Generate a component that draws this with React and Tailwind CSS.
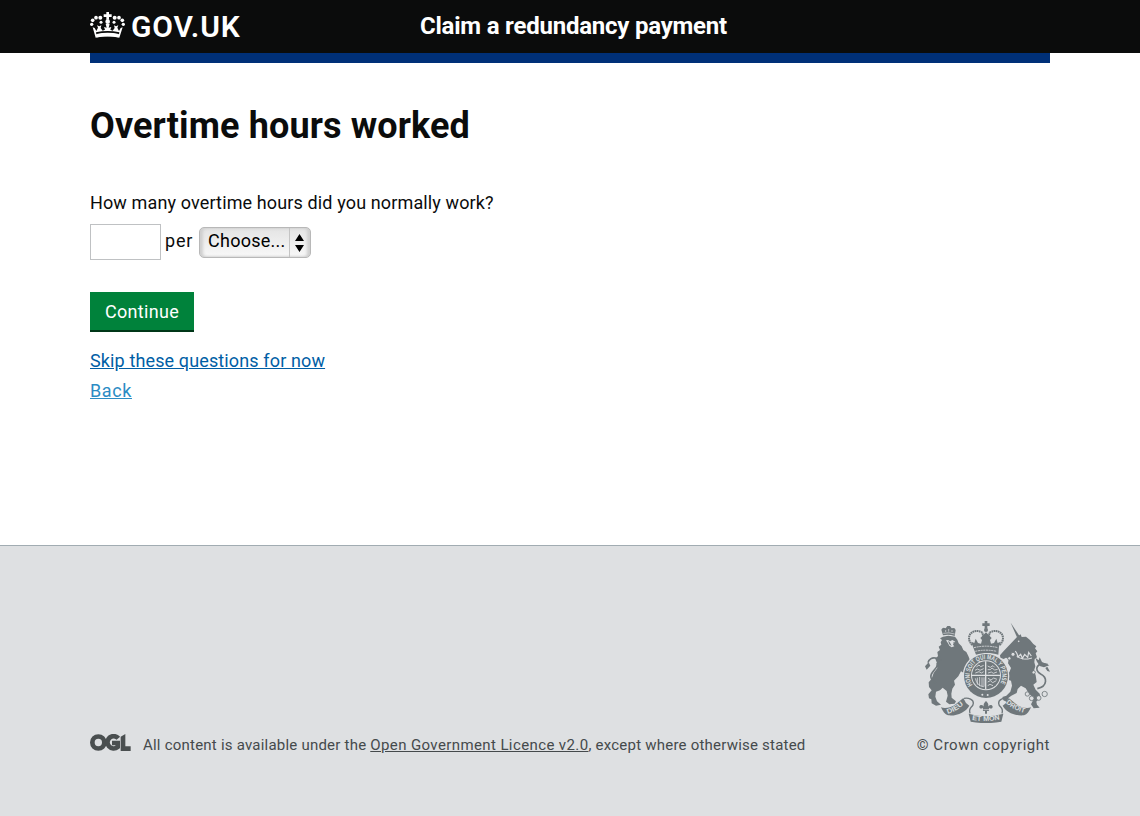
import React from 'react';

function Crown() {
  return (
    <svg className="block h-[27px] w-[35px]" viewBox="0 0 105 81" fill="#fff">
      <path d="M49 0h8v7h8v8h-8v8h-8v-8h-8V7h8z" />
      <circle cx="53" cy="29" r="7" />
      <circle cx="31" cy="17" r="6" />
      <circle cx="18" cy="17" r="5.5" />
      <circle cx="8" cy="25" r="5.5" />
      <circle cx="5" cy="37" r="5" />
      <circle cx="74" cy="17" r="6" />
      <circle cx="87" cy="17" r="5.5" />
      <circle cx="97" cy="25" r="5.5" />
      <circle cx="100" cy="37" r="5" />
      <circle cx="33" cy="31" r="4.5" />
      <circle cx="72" cy="31" r="4.5" />
      <path d="M8 46l6 2 5 9 5-10-3-7 7 3 6-3-2 8 6 8 7-3-3-8 8 2-3-11h12l-3 11 8-2-3 8 7 3 6-8-2-8 6 3 7-3-3 7 5 10 5-9 6-2-10 31c-21-5-49-5-71 0z" />
      <path d="M18 61q35-8 70 0l-1 6q-34-7-68 0z" fill="#0b0c0c" />
      <path d="M20 66q33-7 66 0l-1 10q-32-6-64 0z" />
    </svg>
  );
}

function OglLogo() {
  return (
    <svg className="-mt-[5px] block h-[17px] w-[41px]" viewBox="0 0 123 51">
      <g fill="none" stroke="#4a4f50" strokeWidth="14">
        <circle cx="25" cy="25.500" r="18" />
        <path d="M85 13A18.500 18.500 0 1 0 83 39V27H66" />
      </g>
      <path fill="#4a4f50" d="M92 8L106 0V37H122V51H92z" />
    </svg>
  );
}

function CoatOfArms() {
  return (
    <svg className="block h-[102px] w-[125px]" viewBox="30 18 375 306" fill="#6f777b">
      <defs>
        <path id="garter" d="M173 210A49 49 0 1 1 253 210" />
        <path id="dieu" d="M98 297Q126 289 150 265" />
        <path id="etmon" d="M171 315Q212 322 256 313" />
        <path id="droit" d="M272 264Q299 288 333 295" />
      </defs>

      {/* motto ribbons */}
      <path d="M78 277c12 5 32 1 45-10l22-18 8 15 10 8c-10 19-37 32-64 29-9-3-16-12-21-24z" />
      <path d="M348 277c-12 5-32 1-45-10l-22-18-8 15-10 8c10 19 37 32 64 29 9-3 16-12 21-24z" />
      <path d="M161 296q52 15 104 0l-6 24q-46 9-92 0z" />
      <path d="M147 250c14-3 29 4 28 15-1 14-16 10-10 30M279 250c-14-3-29 4-28 15 1 14 16 10 10 30" fill="none" stroke="#6f777b" strokeWidth="4" />
      <g fill="#dee0e2" fontFamily="Liberation Sans" fontWeight="700">
        <text fontSize="21"><textPath href="#dieu" textLength="56" lengthAdjust="spacingAndGlyphs">DIEU</textPath></text>
        <text fontSize="21"><textPath href="#etmon" textLength="84" lengthAdjust="spacingAndGlyphs">ET MON</textPath></text>
        <text fontSize="21"><textPath href="#droit" textLength="64" lengthAdjust="spacingAndGlyphs">DROIT</textPath></text>
      </g>
      <path d="M213 258c9 8 8 14 4 21 3-11 15-12 16-4 0 6-7 8-10 3-2 5-2 8 0 10h-7v8h-6v-8h-7c2-2 2-5 0-10-3 5-10 3-10-3 1-8 13-7 16 4-4-7-5-13 4-21z" />
      <path d="M205 284h17" stroke="#dee0e2" strokeWidth="2" />

      {/* lion */}
      <g transform="translate(27 15)">
        <path d="M57 46l-5-17q4-9 13-4l5-7h8l5 7q11-3 12 6l-3 17q-18-6-35-2z" />
        <path d="M58 40q17-4 34 2M65 30v6M74 27v8M84 30v6" stroke="#dee0e2" strokeWidth="2" fill="none" />
        <path d="M57 50l16-3 20 3 7 9 4 11 9 9 5 11 9 6 6 12 5 13-2 14 4 10-5 14 2 12-7 15-9-3-3-9 6-4-1-9-12-7-8 15-13 13 3 12-8 12-3 15 1 12 13 11-4 7-16 2-10-8 5-18-3-14-12-10-8 8-12 4-2 15 5 14 12 10-15 3-13-7-1-12-7-3-2-12 10-12-8-10-1-14 9-11 6-17 11-15-3-14 4-7-5-8 6-7-2-12 8-6-4-10 8-6-2-7 4-7-6-5z" />
        <path d="M66 61l7-1 5 4 7-4 9 5-5 4-2 5 4 5-8 3-7-5-4-7z" fill="#dee0e2" />
        <path d="M73 61l6 9 4 8-6-4-3-6zM88 65l5 3-4 1z" />
        <path d="M36 189c-20-11-19-24-6-38 12-12 18-34 4-37-10-2-20 4-22 14" fill="none" stroke="#6f777b" strokeWidth="5" />
        <path d="M33 114l18-5-8 8 9 3-14 7zM3 139l11-12 5 10-11 12z" />
      </g>

      {/* unicorn */}
      <g transform="translate(213 15)">
        <path d="M74 8l26 39-7 5z" />
        <path d="M93 51l11-8 3 8 13-1 12 10 10 12 9 7-4 6 7 9-5 6 4 12-7 5-1 10 3 12-4 13 5 14 3 20-10 8 7 15 12 12 2 9-12 15 2 9 8 9-18 2-8-12 9-18-15-14-10-16-14-8-10 10-3 12-16 8-9 7-4 12-11-5-3-10 12-4 12-12 5-18-3-15-16-5-6 4-9 12-7-2-2-11 9-4 8-10-17-5-4-8-5-6 3-11 8-5 8 4-5 8 11 9 19 5 5-13-9-14 2-12-8-5-7 4-10-4-1-7 9-11z" />
        <path d="M88 93l5 8 3 10 8-8 5 12 7-12 9 9 3-15 8 11" stroke="#dee0e2" strokeWidth="3.500" fill="none" />
        <path d="M92 109q22 14 46 5" stroke="#dee0e2" strokeWidth="3" fill="none" />
        <circle cx="98" cy="64" r="2.500" fill="#dee0e2" />
        <path d="M154 206c32-8 30-34 10-44-23-13-10-38 21-28" fill="none" stroke="#6f777b" strokeWidth="5" />
        <path d="M152 124l-4-11 10 8 3-9 7 14 22 10-16 6-13-4zM184 140l8 15-8-2-6-9z" />
        <g fill="#dee0e2" stroke="#6f777b" strokeWidth="2.500">
          <circle cx="81" cy="103" r="6" />
          <circle cx="70" cy="115" r="5" />
          <circle cx="143" cy="157" r="5" />
          <circle cx="124" cy="222" r="6.500" />
          <circle cx="137" cy="235" r="7" />
          <circle cx="158" cy="234" r="7" />
          <circle cx="176" cy="222" r="8" />
        </g>
      </g>

      {/* shield inside the garter */}
      <circle cx="213" cy="183" r="70" fill="#dee0e2" />
      <circle cx="213" cy="183" r="66" />
      <circle cx="213" cy="181" r="45" fill="#dee0e2" />
      <circle cx="213" cy="181" r="42" />
      <path d="M212 139v84M171 181h84" stroke="#dee0e2" strokeWidth="4" />
      <g fill="none" stroke="#dee0e2" strokeWidth="2.500">
        <path d="M184 156l8-6 5 5 9-4M180 166l8-4 7 4 11-5M181 174l11-4 7 4 7-4M218 153l8 4 8-5 5 5M218 164h8l5-5 8 6 9-2M219 174l10-3 6 4 11-4M187 188v21M194 186v27M201 187v27M207 187v28M181 190q5 23 25 25M219 190l9 5 8-6 10 4M218 201l8-4 7 6 11-6M218 212l7-4 9 4" />
      </g>
      <text fill="#dee0e2" fontFamily="Liberation Sans" fontWeight="700" fontSize="20">
        <textPath href="#garter" textLength="208" lengthAdjust="spacingAndGlyphs">HONI SOIT QUI MAL Y PENSE</textPath>
      </text>
      <circle cx="202" cy="239" r="3" fill="#dee0e2" />
      <circle cx="218" cy="240" r="3" fill="#dee0e2" />

      {/* crown */}
      <path d="M209 18h8v7h7v8h-7v8h-8v-8h-7v-8h7z" />
      <circle cx="213" cy="45" r="6" />
      <g fill="none" stroke="#6f777b" strokeWidth="6" strokeDasharray="5 1.500">
        <path d="M172 90C146 64 176 36 202 53l7 28" />
        <path d="M254 90C280 64 250 36 224 53l-7 28" />
      </g>
      <path d="M174 95l-5-15 9 4 4-13 7 13 9 2 3-11-5-6 17-17 17 17-5 6 3 11 9-2 7-13 4 13 9-4-5 15-2 24c-22-7-45-7-67 0z" />
      <path d="M177 98q36-9 72 0M181 109q32-7 64 0" stroke="#dee0e2" strokeWidth="2.500" strokeDasharray="6 2" fill="none" />
    </svg>
  );
}

function Header() {
  return (
    <header className="h-[53px] bg-[#0b0c0c]">
      <div className="mx-auto flex w-[960px]">
        <a className="flex w-[330px] pt-3">
          <Crown />
          <span className="ml-[6px] font-['Roboto'] text-[30px] leading-[30px] font-semibold tracking-[0.9px] whitespace-nowrap text-white">GOV.UK</span>
        </a>
        <span className="pt-[11px] text-[24px] leading-[30px] font-bold tracking-[-0.22px] whitespace-nowrap text-white">Claim a redundancy payment</span>
      </div>
    </header>
  );
}

function ChooseSelect() {
  return (
    <button className="ml-[6px] flex h-[31px] w-[112px] overflow-hidden rounded-[5px] border border-[#b8b8b8] bg-linear-to-b from-[#e4e4e4] to-[#f8f8f8] text-black shadow-[inset_3px_0_3px_#cfcfcf,inset_-3px_0_3px_#cfcfcf]">
      <span className="w-[90px] border-r border-[#c4c4c4] pl-2 text-left text-[18px] leading-[26px] tracking-[0.25px] whitespace-nowrap">Choose...</span>
      <svg className="mt-[6px] ml-[5px] h-[18px] w-[9px]" viewBox="0 0 9 18">
        <path d="M4.500 0L9 7H0zM4.500 18L0 11H9z" />
      </svg>
    </button>
  );
}

export default function App() {
  return (
    <div className="flex h-[816px] flex-col bg-white font-['Roboto',sans-serif] text-[18px] text-[#0b0c0c]">
      <Header />
      <main className="mx-auto h-[492px] w-[960px] border-t-[10px] border-[#003078]">
        <h1 className="pt-[41px] text-[36px] leading-[44px] font-bold tracking-[0.12px]">Overtime hours worked</h1>
        <label className="mt-[42px] block leading-[25px] tracking-[0.13px]">How many overtime hours did you normally work?</label>
        <div className="mt-[9px] flex h-[36px] items-center">
          <input className="h-[36px] w-[71px] border border-[#bfc1c3]" />
          <span className="ml-1 -mt-[3px] w-[28px] leading-[30px] tracking-[0.8px]">per</span>
          <ChooseSelect />
        </div>
        <button className="mt-8 block h-10 w-[104px] border-b-2 border-[#003618] bg-[#00823b] tracking-[0.3px] text-white">Continue</button>
        <div className="mt-[14px] flex flex-col items-start leading-[30px]">
          <a className="tracking-[0.13px] text-[#005ea5] underline">Skip these questions for now</a>
          <a className="tracking-[0.6px] text-[#2b8cc4] underline">Back</a>
        </div>
      </main>
      <footer className="flex-1 border-t border-[#a1acb2] bg-[#dee0e2] pt-[75px] text-[15px] text-[#454a4c]">
        <div className="mx-auto flex w-[960px] items-end justify-between">
          <div className="flex items-center">
            <OglLogo />
            <p className="ml-3 leading-5 tracking-[0.22px] whitespace-nowrap">All content is available under the <a className="tracking-[0.39px] underline">Open Government Licence v2.0</a>, except where otherwise stated</p>
          </div>
          <div className="flex flex-col items-end">
            <CoatOfArms />
            <span className="mt-3 leading-5 tracking-[0.53px]">© Crown copyright</span>
          </div>
        </div>
      </footer>
    </div>
  );
}
